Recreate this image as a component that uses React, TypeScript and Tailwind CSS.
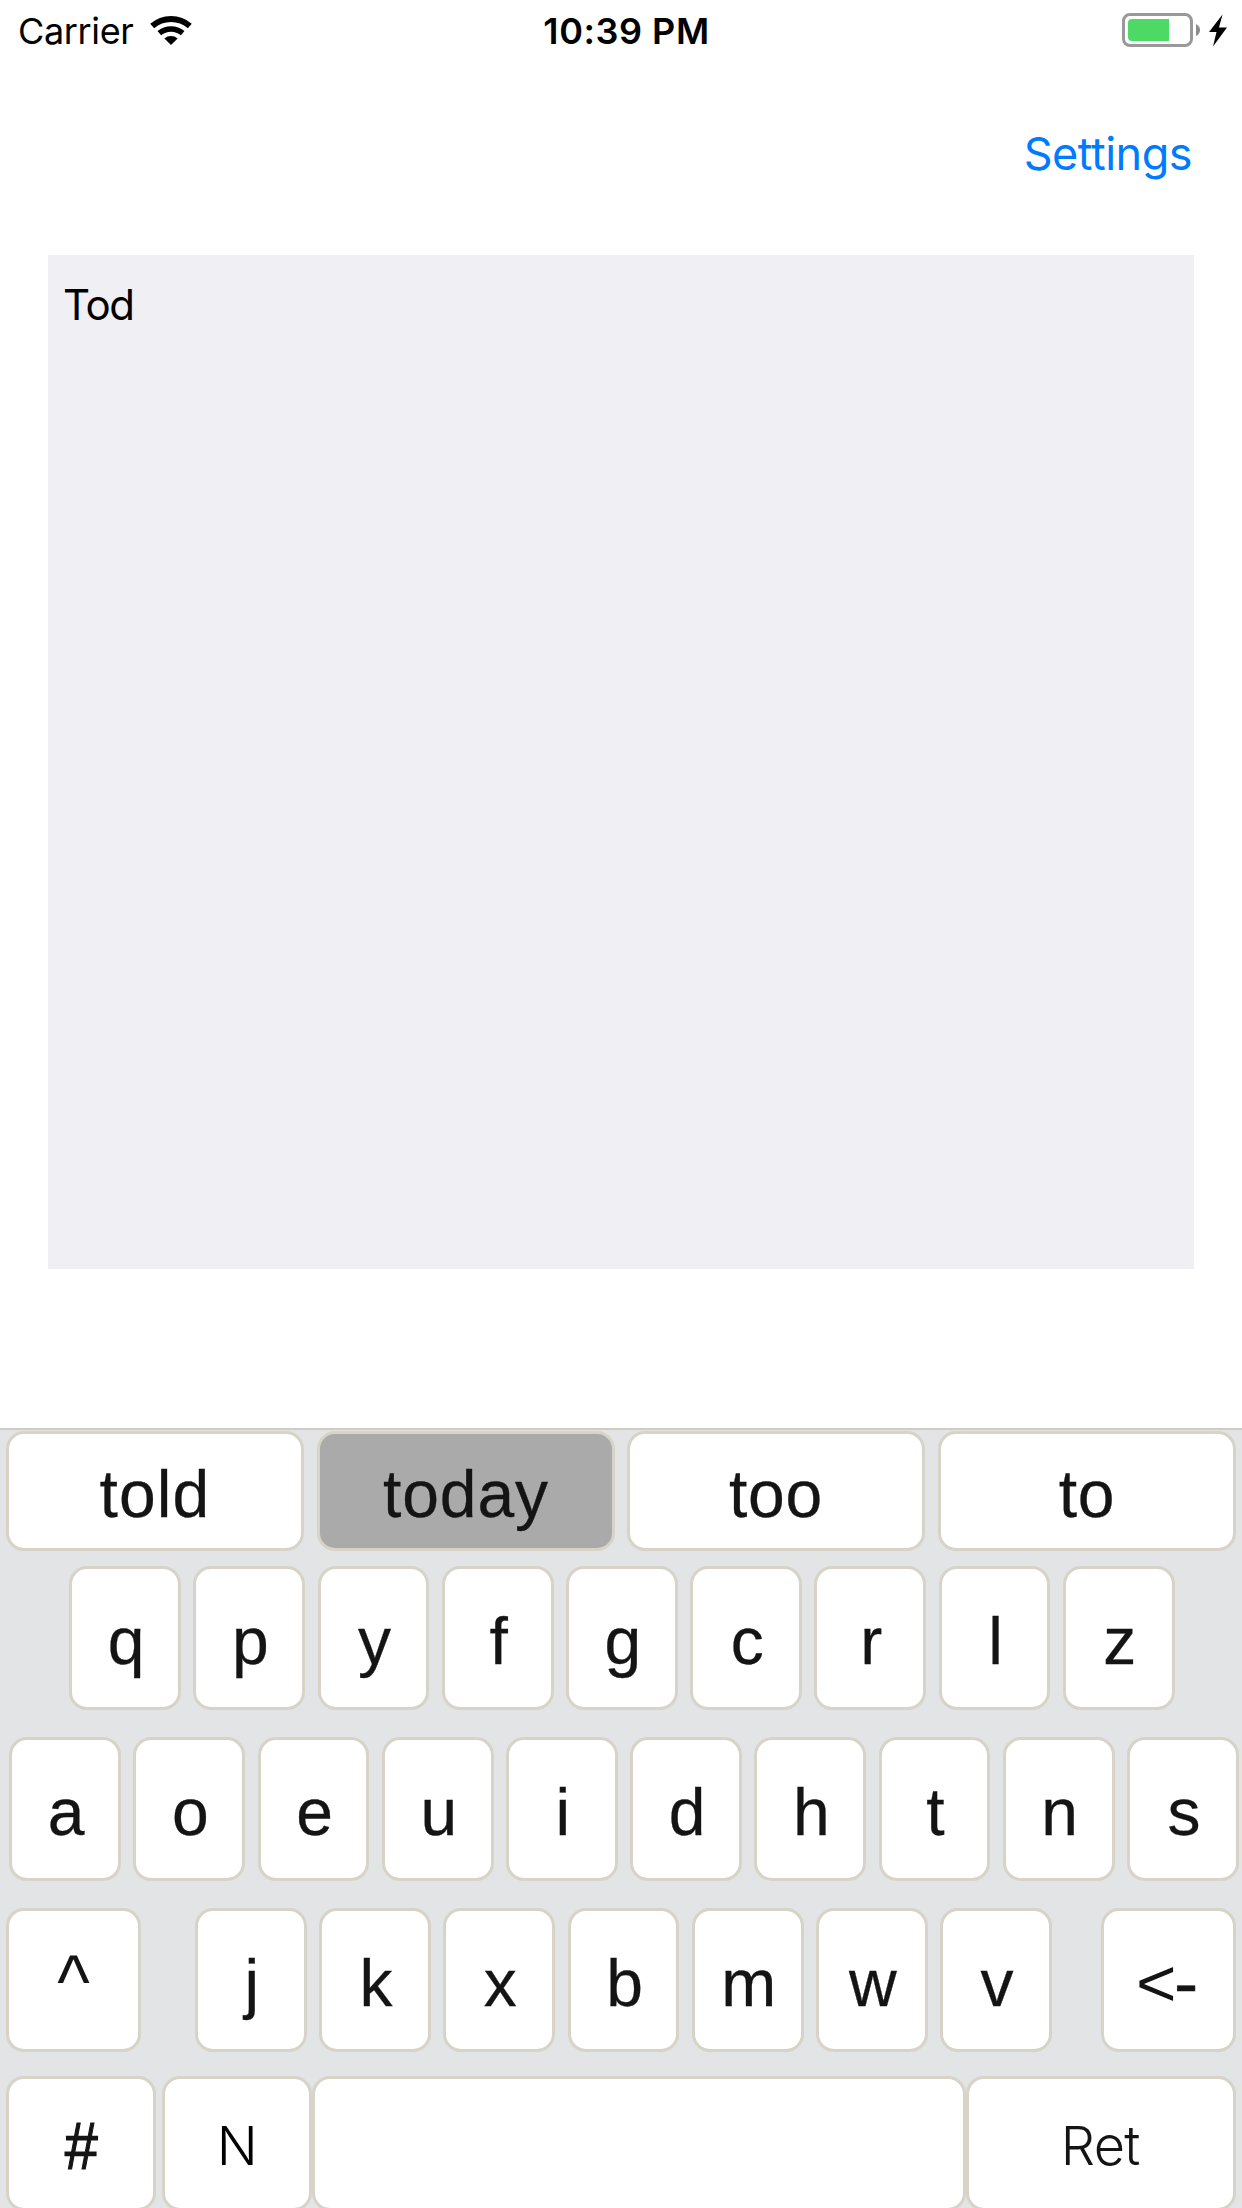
import type { ReactNode } from "react";

function Key({ children, className = "" }: { children?: ReactNode; className?: string }) {
  return (
    <button
      className={
        "flex shrink-0 items-center justify-center whitespace-pre rounded-[18px] border-[3px] border-[#d7d3c7] " +
        className
      }
    >
      {children}
    </button>
  );
}

function LetterRow({ letters }: { letters: string }) {
  return (
    <div className="flex gap-[12.4px]">
      {letters.split("").map((l) => (
        <Key key={l} className="h-36 w-[111.8px] bg-white pl-[2px] pt-[5px] [-webkit-text-stroke:0.3px_#141414]">
          {l}
        </Key>
      ))}
    </div>
  );
}

function StatusBar() {
  return (
    <header className="grid h-[60px] grid-cols-3 text-[36px] leading-[60px] text-black">
      <div className="flex pl-[18px]">
        <span className="w-[131px] pt-px tracking-[-0.35px]">Carrier</span>
        <svg className="mt-[14px] h-[32px] w-[44px]" viewBox="149 14 44 32" fill="none" stroke="#000">
          <path d="M152.2 26 A28.5 28.5 0 0 1 189.8 26" strokeWidth="6" />
          <path d="M159.3 33.2 A18.2 18.2 0 0 1 182.7 33.2" strokeWidth="5.6" />
          <path d="M164.4 38.6 A10 10 0 0 1 177.6 38.6 L171 45 Z" fill="#000" stroke="none" />
        </svg>
      </div>
      <div className="whitespace-nowrap pl-[11px] pt-px text-center font-[560] tracking-[0.55px]">10:39 PM</div>
      <div className="flex justify-end pr-[14px]">
        <svg className="mt-[12px] h-[36px] w-[108px]" viewBox="1120 12 108 36">
          <rect x="1123.5" y="14.5" width="68" height="31" rx="6.5" fill="none" stroke="#999" strokeWidth="3" />
          <path d="M1169 19 V41 H1132 Q1128 41 1128 37 V23 Q1128 19 1132 19 Z" fill="#4cd964" />
          <path d="M1196 24 Q1200 26 1200 30 Q1200 34 1196 36 Z" fill="#8c8c8c" />
          <path d="M1222.5 14.5 L1209 32 H1216.5 L1213 46.5 L1227 27.5 H1219 Z" fill="#000" />
        </svg>
      </div>
    </header>
  );
}

export default function App() {
  return (
    <div className="flex h-[2208px] w-[1242px] flex-col overflow-hidden bg-white font-['Inter',sans-serif]">
      <StatusBar />
      <div className="flex h-[195px] justify-end pr-[50px] pt-[67px]">
        <button className="h-[54px] text-[45px] leading-[54px] tracking-[-0.5px] text-[#007aff]">Settings</button>
      </div>
      <main className="ml-12 h-[1014px] w-[1146px] bg-[#efeff4] pl-[15px] pt-[25px] text-[42px] leading-[50px] tracking-[-1.4px] text-black">
        Tod
      </main>
      <section className="mt-[159px] h-[780px] overflow-hidden border-t-2 border-[#d0ccc3] bg-[#e2e4e6] font-['Liberation_Sans',Arial,sans-serif] text-[66px] leading-none text-[#141414]">
        <div className="flex gap-[12.5px] pl-1.5 pt-px [-webkit-text-stroke:0.3px_#141414]">
          <Key className="h-[120px] w-[298px] bg-white pt-[5px] tracking-[1.1px]">told</Key>
          <Key className="h-[120px] w-[298px] bg-[#aaaaaa] pl-px pt-[5px] tracking-[0.9px]">today</Key>
          <Key className="h-[120px] w-[298px] bg-white pt-[5px] tracking-[0.8px]">too</Key>
          <Key className="h-[120px] w-[298px] bg-white pl-px pt-[5px] tracking-[0.8px]">to</Key>
        </div>
        <div className="mt-[15px] pl-[69.3px]">
          <LetterRow letters="qpyfgcrlz" />
        </div>
        <div className="mt-[27px] pl-[9.3px]">
          <LetterRow letters="aoeuidhtns" />
        </div>
        <div className="mt-[27px] flex justify-between pl-1.5 pr-1.5">
          <Key className="h-36 w-[135px] bg-white pt-1">
            <span className="inline-block scale-x-105 scale-y-115">^</span>
          </Key>
          <div className="pl-[5px]">
            <LetterRow letters="jkxbmwv" />
          </div>
          <Key className="h-36 w-[135px] bg-white pr-[3px] pt-[5px]">
            <span className="inline-block scale-x-105">{"<"}</span>
            <span className="inline-block scale-x-110 [-webkit-text-stroke:0.5px_#141414]">-</span>
          </Key>
        </div>
        <div className="mt-6 flex pl-1.5">
          <Key className="mr-1.5 h-[135px] w-[150px] bg-white pt-1 [-webkit-text-stroke:1.2px_#141414]">
            <span className="inline-block scale-x-90">#</span>
          </Key>
          <Key className="h-[135px] w-[149.7px] bg-white pt-1 pl-px font-['Inter',sans-serif] text-[54px] font-light text-black">
            N
          </Key>
          <Key className="h-[135px] w-[654.8px] bg-white" />
          <Key className="h-[135px] w-[269.5px] bg-white pr-[2px] pt-1 font-['Inter',sans-serif] text-[54px] font-light tracking-[-0.7px]">
            Ret
          </Key>
        </div>
      </section>
    </div>
  );
}
